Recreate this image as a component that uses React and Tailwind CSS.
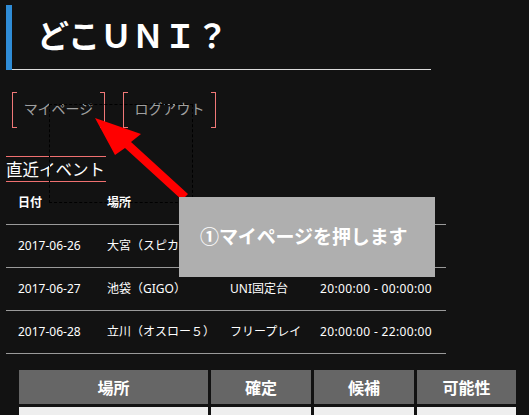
import React from "react";

const rows = [
  { date: "2017-06-26", place: "大宮（スピカ）", type: "UNI固定台", time: "20:00:00 - 00:00:00" },
  { date: "2017-06-27", place: "池袋（GIGO）", type: "UNI固定台", time: "20:00:00 - 00:00:00" },
  { date: "2017-06-28", place: "立川（オスロー５）", type: "フリープレイ", time: "20:00:00 - 22:00:00" },
];

function BracketButton({ label, width }) {
  return (
    <div className={`flex h-[36px] ${width}`}>
      <div className="w-[5px] border-l border-y border-[#f07878]" />
      <div className="flex-1 flex items-center justify-center text-[14px] text-[#a0a0a0] pb-[4px]">{label}</div>
      <div className="w-[5px] border-r border-y border-[#f07878]" />
    </div>
  );
}

export default function App() {
  return (
    <div
      className="relative w-[529px] h-[415px] overflow-hidden bg-[#121212] text-white"
      style={{ fontFamily: '"Noto Sans", "Noto Sans CJK JP", sans-serif' }}
    >
      {/* Header */}
      <div className="flex ml-[6px] mt-[5px] w-[425px] h-[65px]">
        <div className="w-[6px] bg-[#2f8cd6]" />
        <div className="flex-1 border-b border-[#dcdcdc] flex items-center pl-[25px] pb-[6px]">
          <span className="text-[32px] font-bold leading-none" style={{ fontFamily: '"Noto Sans CJK JP", sans-serif' }}>
            どこＵＮＩ？
          </span>
        </div>
      </div>

      {/* Buttons */}
      <div className="flex gap-[18px] ml-[12px] mt-[22px]">
        <BracketButton label="マイページ" width="w-[93px]" />
        <BracketButton label="ログアウト" width="w-[93px]" />
      </div>

      {/* Section heading */}
      <div className="ml-[6px] mt-[28px] w-[100px] border-y border-[#f07070] h-[26px] flex items-center">
        <span className="text-[16.5px] leading-none whitespace-nowrap pt-[1px]" style={{ fontFamily: '"Noto Sans CJK JP", sans-serif' }}>
          直近イベント
        </span>
      </div>

      {/* Events table */}
      <div className="ml-[6px] w-[440px] text-[12px]">
        <div className="flex h-[43px] items-center border-b border-[#9a9a9a] font-bold">
          <div className="w-[89px] pl-[12px]">日付</div>
          <div className="w-[123px] pl-[12px]">場所</div>
          <div className="w-[90px] pl-[12px]"></div>
          <div className="flex-1 pl-[12px]"></div>
        </div>
        {rows.map((r) => (
          <div key={r.date} className="flex h-[43px] items-center border-b border-[#9a9a9a]">
            <div className="w-[89px] pl-[12px]">{r.date}</div>
            <div className="w-[123px] pl-[12px]">{r.place}</div>
            <div className="w-[90px] pl-[12px]">{r.type}</div>
            <div className="flex-1 pl-[12px] tracking-[0.35px]">{r.time}</div>
          </div>
        ))}
      </div>

      {/* Bottom table */}
      <div className="ml-[19px] mt-[16px] grid grid-cols-[189px_100px_100px_99px] gap-[3px] text-[16px] font-bold" style={{ fontFamily: '"Noto Sans CJK JP", sans-serif' }}>
        <div className="h-[34px] bg-[#666666] flex items-center justify-center">場所</div>
        <div className="h-[34px] bg-[#666666] flex items-center justify-center">確定</div>
        <div className="h-[34px] bg-[#666666] flex items-center justify-center">候補</div>
        <div className="h-[34px] bg-[#666666] flex items-center justify-center">可能性</div>
        <div className="h-[34px] bg-[#eeeeee] flex items-center justify-center text-[#333] font-normal">大宮（スピカ）</div>
        <div className="h-[34px] bg-[#eeeeee] flex items-center justify-center text-[#333] font-normal">3</div>
        <div className="h-[34px] bg-[#eeeeee] flex items-center justify-center text-[#333] font-normal">2</div>
        <div className="h-[34px] bg-[#eeeeee] flex items-center justify-center text-[#333] font-normal">5</div>
      </div>

      {/* Dashed highlight */}
      <div className="absolute left-[49px] top-[104px] w-[144px] h-[99px] border border-dashed border-[#000]" />

      {/* Arrow */}
      <svg className="absolute left-0 top-0" width="529" height="415" viewBox="0 0 529 415">
        <polygon
          fill="#ff0000"
          points="95,118 141,134 131,142 188,194 182,200 125,148 115,155"
        />
      </svg>

      {/* Callout box */}
      <div className="absolute left-[179px] top-[197px] w-[256px] h-[80px] bg-[#afafaf] flex items-center pl-[21px] pb-[2px]">
        <span className="text-[19px] font-bold text-white tracking-[-0.1px]" style={{ fontFamily: '"Noto Sans CJK JP", sans-serif' }}>
          ①マイページを押します
        </span>
      </div>
    </div>
  );
}
